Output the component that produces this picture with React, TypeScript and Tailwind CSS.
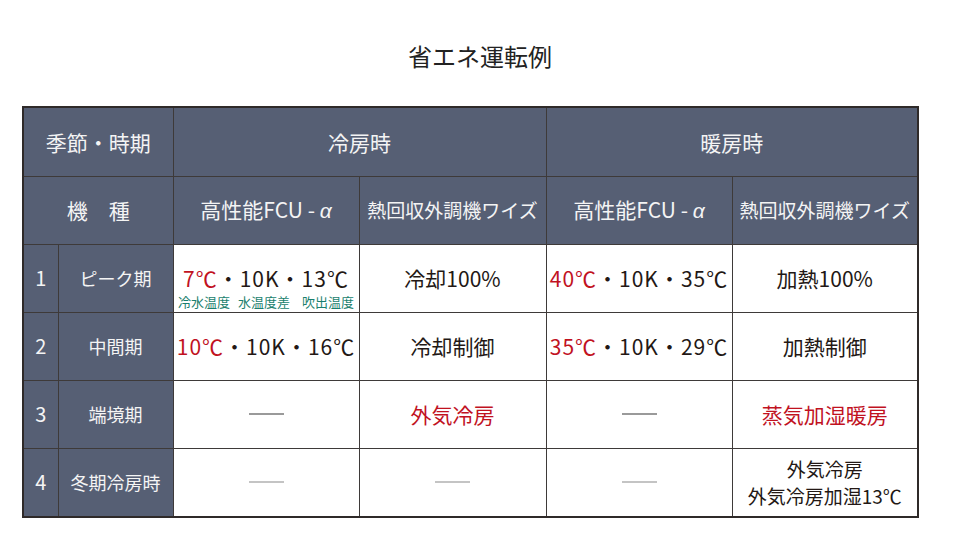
const HEAD = "bg-[#565f74] text-[#f4f4f4]";
const RED = "text-[#c1121f]";

const Dash = ({ light }: { light?: boolean }) => (
  <div className={`mx-auto h-[2px] w-[35px] ${light ? "bg-[#c4c4c4]" : "bg-[#9a9a9a]"}`} />
);

const Temps = ({ a, c }: { a: string; c: string }) => (
  <span className="tracking-[1px]">
    <span className={RED}>{a}</span>
    <span>・10K・{c}</span>
  </span>
);

const cell = "border border-[#3e3a39] text-center align-middle";
const headCell = `${cell} ${HEAD} border-[#2f2a29]`;

export default function App() {
  return (
    <div
      className="flex h-[560px] w-[960px] flex-col bg-white text-[#231815]"
      style={{ fontFamily: '"Noto Sans CJK JP", "Noto Sans", sans-serif' }}
    >
      <h1 className="mt-[40px] h-[32px] text-center text-[24px] leading-[32px] text-[#222]">省エネ運転例</h1>
      <table className="ml-[22px] mt-[34px] w-[896px] table-fixed border-collapse border-2 border-[#2f2a29] text-[21px] leading-[26px]">
        <colgroup>
          <col className="w-[35px]" />
          <col className="w-[115px]" />
          <col className="w-[186px]" />
          <col className="w-[187px]" />
          <col className="w-[186px]" />
          <col className="w-[186px]" />
        </colgroup>
        <tbody>
          <tr className="h-[69px]">
            <td colSpan={2} className={headCell}>季節・時期</td>
            <td colSpan={2} className={headCell}>冷房時</td>
            <td colSpan={2} className={headCell}>暖房時</td>
          </tr>
          <tr className="h-[68px]">
            <td colSpan={2} className={headCell}>機　種</td>
            <td className={headCell}>高性能FCU - <i className="font-['Liberation_Sans']">α</i></td>
            <td className={`${headCell} text-[19px]`}>熱回収外調機ワイズ</td>
            <td className={headCell}>高性能FCU - <i className="font-['Liberation_Sans']">α</i></td>
            <td className={`${headCell} text-[19px]`}>熱回収外調機ワイズ</td>
          </tr>
          <tr className="h-[68px]">
            <td className={`${cell} ${HEAD} text-[20px]`}>1</td>
            <td className={`${cell} ${HEAD} text-[18px]`}>ピーク期</td>
            <td className={`${cell} align-top`}>
              <div className="pt-[21px] leading-[24px]">
                <Temps a="7℃" c="13℃" />
              </div>
              <div className="mt-[5px] flex justify-center gap-[8px] text-[13px] leading-[14px] text-[#1b7f6e]">
                <span>冷水温度</span>
                <span className="mr-[4px]">水温度差</span>
                <span>吹出温度</span>
              </div>
            </td>
            <td className={cell}>冷却100%</td>
            <td className={cell}><Temps a="40℃" c="35℃" /></td>
            <td className={cell}>加熱100%</td>
          </tr>
          <tr className="h-[68px]">
            <td className={`${cell} ${HEAD} text-[20px]`}>2</td>
            <td className={`${cell} ${HEAD} text-[18px]`}>中間期</td>
            <td className={cell}><Temps a="10℃" c="16℃" /></td>
            <td className={cell}>冷却制御</td>
            <td className={cell}><Temps a="35℃" c="29℃" /></td>
            <td className={cell}>加熱制御</td>
          </tr>
          <tr className="h-[68px]">
            <td className={`${cell} ${HEAD} text-[20px]`}>3</td>
            <td className={`${cell} ${HEAD} text-[18px]`}>端境期</td>
            <td className={cell}><Dash /></td>
            <td className={`${cell} ${RED}`}>外気冷房</td>
            <td className={cell}><Dash /></td>
            <td className={`${cell} ${RED}`}>蒸気加湿暖房</td>
          </tr>
          <tr className="h-[69px]">
            <td className={`${cell} ${HEAD} text-[20px]`}>4</td>
            <td className={`${cell} ${HEAD} text-[18px]`}>冬期冷房時</td>
            <td className={cell}><Dash light /></td>
            <td className={cell}><Dash light /></td>
            <td className={cell}><Dash light /></td>
            <td className={`${cell} text-[19px] leading-[27px]`}>
              <div>外気冷房</div>
              <div>外気冷房加湿13℃</div>
            </td>
          </tr>
        </tbody>
      </table>
    </div>
  );
}
